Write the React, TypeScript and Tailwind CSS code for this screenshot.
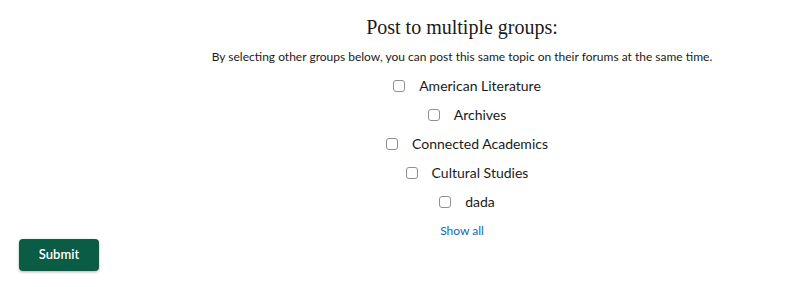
const groups = [
  "American Literature",
  "Archives",
  "Connected Academics",
  "Cultural Studies",
  "dada",
];

function GroupCheckbox({ label }: { label: string }) {
  return (
    <label className="flex h-[29px] items-center justify-center gap-[14px] pl-[10px] text-[14px] text-[#1a1a1a]">
      <span className="block h-[12px] w-[12px] rounded-[3px] border border-[#909090] bg-white" />
      <span>{label}</span>
    </label>
  );
}

export default function App() {
  return (
    <div className="h-[287px] w-[808px] bg-white font-['Lato','Open_Sans',sans-serif]">
      <div className="flex flex-col items-center pl-[116px] pt-[13px]">
        <h2 className="font-['Liberation_Serif',serif] text-[20px] leading-[28px] text-[#1a1a1a]">
          Post to multiple groups:
        </h2>
        <p className="mt-[8px] text-[12px] leading-[16px] text-[#1a1a1a]">
          By selecting other groups below, you can post this same topic on their forums at the same time.
        </p>
        <div className="mt-[6px] flex flex-col items-center">
          {groups.map((g) => (
            <GroupCheckbox key={g} label={g} />
          ))}
        </div>
        <a href="#" className="mt-[7px] text-[12px] leading-[16px] text-[#0a68c4]">
          Show all
        </a>
      </div>
      <div className="pl-[19px]">
        <button className="h-[32px] w-[80px] rounded-[4px] bg-[#0b5c45] text-[13px] font-semibold text-white shadow-[0_1px_3px_rgba(0,0,0,0.3)]">
          Submit
        </button>
      </div>
    </div>
  );
}
